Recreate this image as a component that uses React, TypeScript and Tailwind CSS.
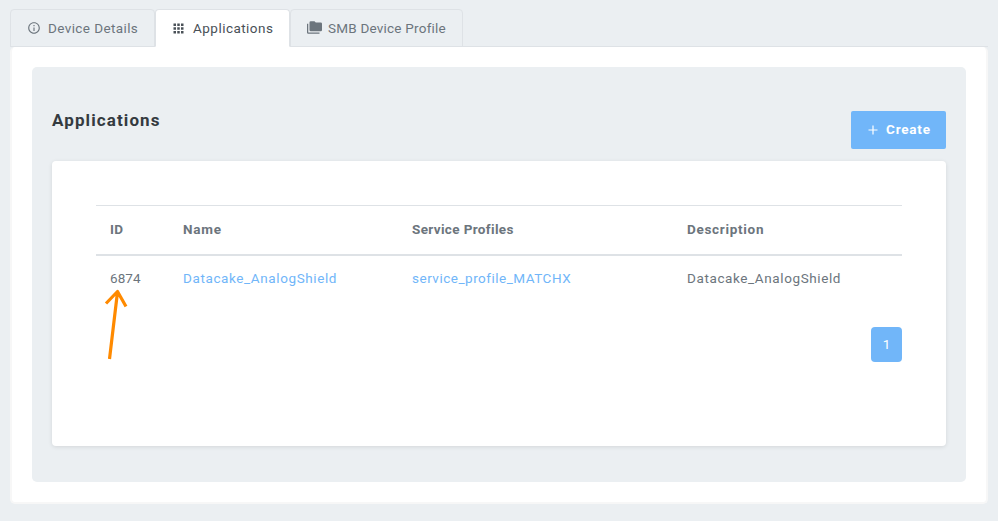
import type { ReactNode } from "react";
import { MdInfoOutline, MdApps } from "react-icons/md";

function FoldersIcon() {
  return (
    <svg viewBox="0 0 24 24" className="mb-px size-[15px]" fill="currentColor">
      <path d="M22 4H14L12 2H6a2 2 0 0 0-2 2v12a2 2 0 0 0 2 2h16a2 2 0 0 0 2-2V6a2 2 0 0 0-2-2M2 6H0v14a2 2 0 0 0 2 2h18v-2H2V6Z" />
    </svg>
  );
}

function Tab({ icon, label, active, size }: { icon: ReactNode; label: ReactNode; active?: boolean; size: string }) {
  return (
    <div
      className={`flex h-[38px] items-center rounded-t-[4px] border border-[#dee2e6] ${size} ${
        active ? "border-b-white bg-white text-[#495057]" : "text-[#6c757d]"
      }`}
    >
      {icon}
      {label}
    </div>
  );
}

export default function App() {
  return (
    <div className="h-[521px] w-[998px] bg-[#ebeff2] px-[10px] pt-[9px] font-['Roboto','Liberation_Sans',sans-serif] text-[13.5px] leading-[21px] text-[#6c757d]">
      <div className="flex h-[38px] border-b border-[#dee2e6]">
        <Tab size="w-[145px] pl-4 gap-[7px]" icon={<MdInfoOutline className="size-[14px]" />} label={<span className="tracking-[0.4px]">Device Details</span>} />
        <Tab active size="w-[135px] pl-[15px] gap-[7px]" icon={<MdApps className="size-[15px]" />} label={<span className="tracking-[0.47px]">Applications</span>} />
        <Tab size="w-[173px] pl-[16px] gap-[6px]" icon={<FoldersIcon />} label={<span className="tracking-[0.22px]">SMB Device Profile</span>} />
      </div>
      <main className="h-[457px] rounded-[5px] border-2 border-t-0 border-[#f7f7f7] bg-white px-5 pt-5">
        <section className="h-[415px] rounded-[5px] bg-[#ebeff2] px-5 pt-[42px]">
          <header className="flex h-[52px] justify-between">
            <h1 className="text-[17px] leading-[22px] font-bold tracking-[1.1px] text-[#343a40]">Applications</h1>
            <button className="mt-[2px] flex h-[38px] w-[95px] items-center rounded-[2px] bg-[#71b6f9] pb-px pl-[17px] text-white">
              <svg viewBox="0 0 10 10" className="mr-[8px] size-[10px]" stroke="currentColor" strokeWidth="1.2">
                <path d="M5 .5v9M.5 5h9" />
              </svg>
              <span className="font-bold tracking-[0.8px]">Create</span>
            </button>
          </header>
          <div className="h-[285px] rounded-[4px] bg-white px-[44px] pt-[44px] shadow-[0_1px_4px_rgba(0,0,0,0.1)]">
            <table className="w-[806px] table-fixed border-collapse text-left">
              <colgroup>
                <col className="w-[73px]" />
                <col className="w-[229px]" />
                <col className="w-[275px]" />
                <col className="w-[229px]" />
              </colgroup>
              <thead>
                <tr className="h-[49px] border-t border-b-2 border-[#dee2e6]">
                  <th className="pl-[14px] font-bold"><span className="tracking-[0.2px]">ID</span></th>
                  <th className="pl-[14px] font-bold"><span className="tracking-[0.8px]">Name</span></th>
                  <th className="pl-[14px] font-bold"><span className="tracking-[0.36px]">Service Profiles</span></th>
                  <th className="pl-[14px] font-bold"><span className="tracking-[0.7px]">Description</span></th>
                </tr>
              </thead>
              <tbody>
                <tr className="h-[47px]">
                  <td className="pl-[14px]"><span className="tracking-[0.1px]">6874</span></td>
                  <td className="pl-[14px] text-[#71b6f9]"><span className="tracking-[0.61px]">Datacake_AnalogShield</span></td>
                  <td className="pl-[14px] text-[#71b6f9]"><span className="tracking-[0.51px]">service_profile_MATCHX</span></td>
                  <td className="pl-[14px]"><span className="tracking-[0.61px]">Datacake_AnalogShield</span></td>
                </tr>
              </tbody>
            </table>
            <nav className="mt-[25px] flex justify-end">
              <span className="flex h-[35px] w-[31px] items-center justify-center rounded-[4px] bg-[#71b6f9] text-white">1</span>
            </nav>
          </div>
        </section>
      </main>
      <svg className="absolute top-[286px] left-[102px] h-[76px] w-[28px]" viewBox="102 286 28 76" fill="none" stroke="#ff8a00" strokeWidth="3.2" strokeLinejoin="round">
        <path d="M109.5 359L117.5 292M106 303.5L117.5 291.5L126 306.5" />
      </svg>
    </div>
  );
}
